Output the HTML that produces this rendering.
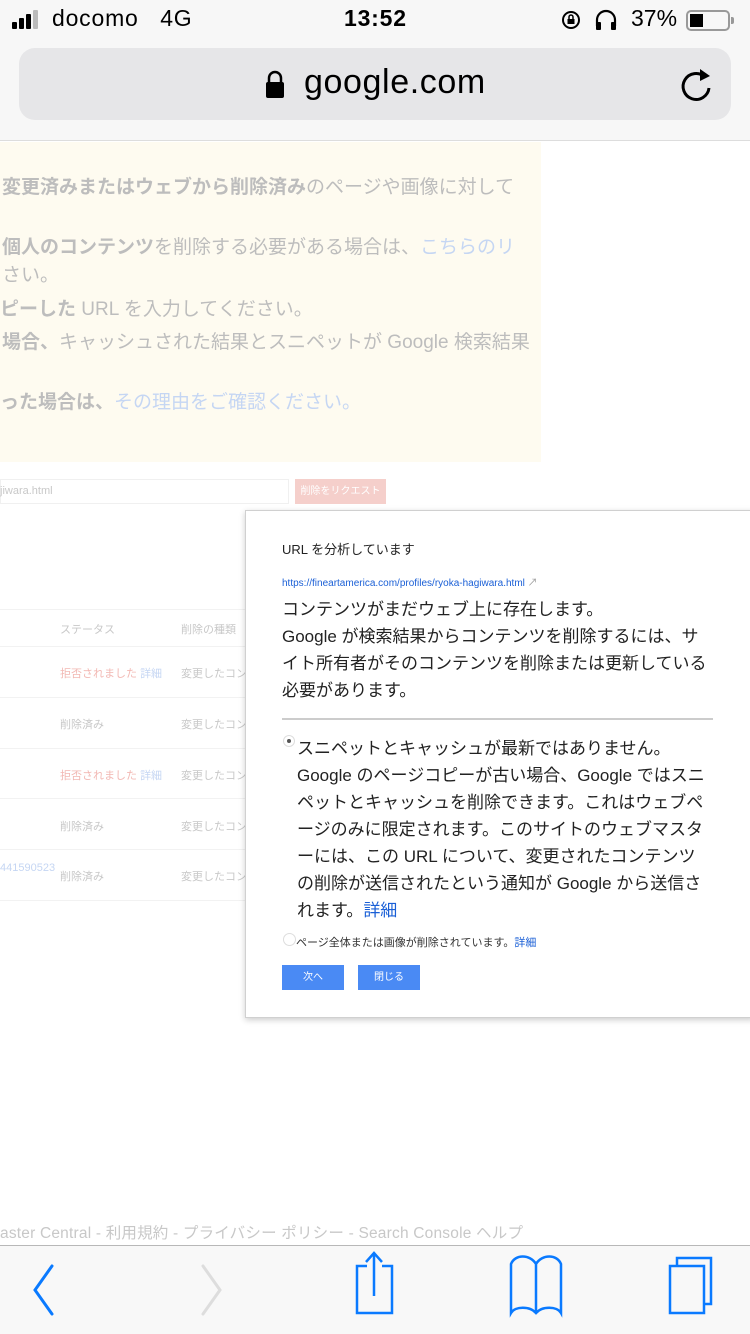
<!DOCTYPE html>
<html><head><meta charset="utf-8"><style>
*{margin:0;padding:0;box-sizing:border-box}
body{width:750px;height:1334px;position:relative;overflow:hidden;background:#fff;font-family:"Liberation Sans","Noto Sans CJK JP",sans-serif;color:#222}
.a{position:absolute;white-space:nowrap}
.g{color:#bdbdbd}
.b{font-weight:bold}
.lb{color:#c5d6f3}
.p{color:#f2b8b3}
.t{font-size:11px;color:#c8c8c8}
.sep{position:absolute;left:0;width:245px;height:1px;background:#f2f2f2}
</style></head><body>
<div class="a" style="left:0;top:0;width:750px;height:140px;background:#f7f7f7"></div>
<div class="a" style="left:12px;top:22px;width:5px;height:7px;background:#000;border-radius:1px"></div>
<div class="a" style="left:19px;top:18px;width:5px;height:11px;background:#000;border-radius:1px"></div>
<div class="a" style="left:26px;top:14px;width:5px;height:15px;background:#000;border-radius:1px"></div>
<div class="a" style="left:33px;top:10px;width:5px;height:19px;background:#bbb;border-radius:1px"></div>
<div class="a" style="left:52px;top:5px;font-size:23px;color:#000;letter-spacing:0.8px">docomo&nbsp;&nbsp;&nbsp;4G</div>
<div class="a b" style="left:344px;top:5px;font-size:23px;color:#000;letter-spacing:0.8px">13:52</div>
<svg class="a" style="left:560px;top:8px" width="24" height="24" viewBox="0 0 24 24"><circle cx="11" cy="12" r="8" fill="none" stroke="#000" stroke-width="2"/><rect x="7.5" y="11" width="7" height="5" fill="#000"/><path d="M9 11V9a2 2 0 0 1 4 0v2" fill="none" stroke="#000" stroke-width="1.5"/></svg>
<svg class="a" style="left:594px;top:8px" width="24" height="24" viewBox="0 0 24 24"><path d="M3 18v-6a9 9 0 0 1 18 0v6" fill="none" stroke="#000" stroke-width="2.2"/><rect x="2" y="14" width="5" height="8" rx="1" fill="#000"/><rect x="17" y="14" width="5" height="8" rx="1" fill="#000"/></svg>
<div class="a" style="left:631px;top:5px;font-size:23px;color:#000">37%</div>
<div class="a" style="left:686px;top:10px;width:44px;height:21px;border:2px solid #999;border-radius:5px"><div style="position:absolute;left:2px;top:2px;width:13px;height:13px;background:#000"></div></div>
<div class="a" style="left:731px;top:17px;width:3px;height:7px;background:#999;border-radius:0 2px 2px 0"></div>
<div class="a" style="left:19px;top:48px;width:712px;height:72px;background:#e6e6e8;border-radius:16px"></div>
<svg class="a" style="left:264px;top:68px" width="22" height="32" viewBox="0 0 22 32"><path d="M5 15V10a6 6 0 0 1 12 0v5" fill="none" stroke="#000" stroke-width="2.5"/><rect x="2" y="14" width="18" height="16" rx="2" fill="#000"/></svg>
<div class="a" style="left:304px;top:63px;font-size:34px;color:#000;letter-spacing:0.6px">google.com</div>
<svg class="a" style="left:678px;top:66px" width="38" height="38" viewBox="0 0 38 38"><path d="M27 11A13 13 0 1 0 31 22" fill="none" stroke="#000" stroke-width="3"/><path d="M22 3l10 7-10 5z" fill="#000"/></svg>
<div class="a" style="left:0;top:140px;width:750px;height:1px;background:#ddd"></div>
<div class="a" style="left:0;top:142px;width:541px;height:320px;background:#fefbf0"></div>
<div class="a g" style="left:2px;top:172px;font-size:19px"><span class="b">変更済みまたはウェブから削除済み</span>のページや画像に対して</div>
<div class="a g" style="left:2px;top:232px;font-size:19px"><span class="b">個人のコンテンツ</span>を削除する必要がある場合は、<span class="lb">こちらのリ</span></div>
<div class="a g" style="left:2px;top:260px;font-size:19px">さい。</div>
<div class="a g" style="left:0;top:294px;font-size:19px"><span class="b">ピーした</span> URL を入力してください。</div>
<div class="a g" style="left:2px;top:327px;font-size:19px"><span class="b">場合、</span>キャッシュされた結果とスニペットが Google 検索結果</div>
<div class="a g" style="left:0;top:387px;font-size:19px"><span class="b">った場合は、</span><span class="lb">その理由をご確認ください。</span></div>
<div class="a" style="left:0;top:479px;width:289px;height:25px;border:1px solid #f0f0f0"></div>
<div class="a" style="left:0;top:485px;font-size:11px;color:#c8c8c8">jiwara.html</div>
<div class="a" style="left:295px;top:479px;width:91px;height:25px;background:#f5cfcb;color:#fff;font-size:10px;text-align:center;line-height:25px">削除をリクエスト</div>
<div class="sep" style="top:609px"></div>
<div class="a t" style="left:60px;top:621px">ステータス</div><div class="a t" style="left:181px;top:621px">削除の種類</div>
<div class="sep" style="top:646px"></div>
<div class="a t" style="left:60px;top:665px"><span class="p">拒否されました</span> <span class="lb">詳細</span></div><div class="a t" style="left:181px;top:665px">変更したコン</div>
<div class="sep" style="top:697px"></div>
<div class="a t lb" style="left:60px;top:716px">削除済み</div><div class="a t" style="left:181px;top:716px">変更したコン</div>
<div class="sep" style="top:748px"></div>
<div class="a t" style="left:60px;top:767px"><span class="p">拒否されました</span> <span class="lb">詳細</span></div><div class="a t" style="left:181px;top:767px">変更したコン</div>
<div class="sep" style="top:798px"></div>
<div class="a t lb" style="left:60px;top:818px">削除済み</div><div class="a t" style="left:181px;top:818px">変更したコン</div>
<div class="sep" style="top:849px"></div>
<div class="a t" style="left:0;top:862px;color:#c5d6f3">441590523</div>
<div class="a t lb" style="left:60px;top:868px">削除済み</div><div class="a t" style="left:181px;top:868px">変更したコン</div>
<div class="sep" style="top:900px"></div>
<div class="a" style="left:245px;top:510px;width:510px;height:508px;background:#fff;border:1px solid #d0d0d0;box-shadow:0 2px 6px rgba(0,0,0,.2)"></div>
<div class="a" style="left:282px;top:539px;font-size:13px;color:#222">URL を分析しています</div>
<div class="a" style="left:282px;top:574px;font-size:10px;color:#1a5fd6">https://fineartamerica.com/profiles/ryoka-hagiwara.html <span style="color:#999">↗</span></div>
<div class="a" style="left:282px;top:596px;font-size:17px;line-height:27px;color:#222">コンテンツがまだウェブ上に存在します。<br>Google が検索結果からコンテンツを削除するには、サ<br>イト所有者がそのコンテンツを削除または更新している<br>必要があります。</div>
<div class="a" style="left:282px;top:718px;width:431px;height:2px;background:#ccc"></div>
<div class="a" style="left:283px;top:735px;width:12px;height:12px;border:1px solid #ddd;border-radius:50%"><div style="position:absolute;left:3px;top:3px;width:4px;height:4px;background:#555;border-radius:50%"></div></div>
<div class="a" style="left:297px;top:735px;font-size:17px;line-height:27px;color:#222">スニペットとキャッシュが最新ではありません。<br>Google のページコピーが古い場合、Google ではスニ<br>ペットとキャッシュを削除できます。これはウェブペ<br>ージのみに限定されます。このサイトのウェブマスタ<br>ーには、この URL について、変更されたコンテンツ<br>の削除が送信されたという通知が Google から送信さ<br>れます。<span style="color:#1a5fd6">詳細</span></div>
<div class="a" style="left:283px;top:933px;width:13px;height:13px;border:1px solid #ddd;border-radius:50%"></div>
<div class="a" style="left:296px;top:934px;font-size:11px;color:#333">ページ全体または画像が削除されています。<span style="color:#1a5fd6">詳細</span></div>
<div class="a" style="left:282px;top:965px;width:62px;height:25px;background:#4a8af4;color:#fff;font-size:10px;text-align:center;line-height:25px">次へ</div>
<div class="a" style="left:358px;top:965px;width:62px;height:25px;background:#4a8af4;color:#fff;font-size:10px;text-align:center;line-height:25px">閉じる</div>
<div class="a" style="left:0;top:1221px;font-size:15.5px;color:#c8c8c8;letter-spacing:0.2px">aster Central - 利用規約 - プライバシー ポリシー - Search Console ヘルプ</div>
<div class="a" style="left:0;top:1245px;width:750px;height:89px;background:#f8f8f8;border-top:1px solid #b8b8b8"></div>
<svg class="a" style="left:0;top:1246px" width="750" height="88" viewBox="0 0 750 88">
<path d="M52 20L35 44l17 24" fill="none" stroke="#0a7aff" stroke-width="3" stroke-linecap="round"/>
<path d="M203 20l17 24-17 24" fill="none" stroke="#ddd" stroke-width="3" stroke-linecap="round"/>
<path d="M367 20h-10v47h35V20h-10M374 50V7M366 16l8-9 8 9" fill="none" stroke="#0a7aff" stroke-width="2.5"/>
<path d="M536 67V18c-6-10-21-10-25 0v49c4-7 19-7 25 0c6-7 21-7 25 0V18c-4-10-19-10-25 0" fill="none" stroke="#0a7aff" stroke-width="2.5"/>
<path d="M670 20h34v47h-34zM677 20v-8h34v46h-7" fill="none" stroke="#0a7aff" stroke-width="2.5"/>
</svg>
</body></html>
